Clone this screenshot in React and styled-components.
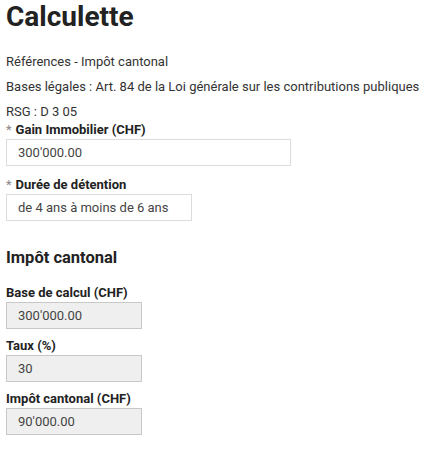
import React from "react";
import styled, { createGlobalStyle } from "styled-components";

const Global = createGlobalStyle`
  html, body { margin: 0; padding: 0; background: #fff; }
  body { font-family: Roboto, "Noto Sans", sans-serif; color: #333; }
`;

const Page = styled.div`
  padding: 0 6px;
`;

const Title = styled.h1`
  font-size: 28px;
  font-weight: 700;
  color: #222;
  margin: 0;
  line-height: 34px;
`;

const Refs = styled.div`
  margin-top: 18px;
  display: flex;
  flex-direction: column;
  gap: 6px;
`;

const Line = styled.p`
  margin: 0;
  font-size: 13px;
  line-height: 19px;
  color: #333;
`;

const Field = styled.div`
  display: flex;
  flex-direction: column;
  margin-top: ${(p) => p.$mt || 0}px;
`;

const Label = styled.label`
  font-size: 13px;
  font-weight: 700;
  color: #222;
  line-height: 18px;
`;

const Star = styled.span`
  color: #888;
  font-weight: 400;
  margin-right: 4px;
`;

const Input = styled.div`
  box-sizing: border-box;
  width: ${(p) => p.$w}px;
  height: 27px;
  border: 1px solid ${(p) => (p.$ro ? "#c8c8c8" : "#dcdcdc")};
  background: ${(p) => (p.$ro ? "#efefef" : "#fff")};
  padding: 0 11px;
  display: flex;
  align-items: center;
  font-size: 13px;
  color: #444;
`;

const Heading = styled.h2`
  font-size: 16.5px;
  font-weight: 700;
  color: #222;
  margin: 26px 0 0;
  line-height: 22px;
`;

export default function App() {
  return (
    <>
      <Global />
      <Page>
        <Title>Calculette</Title>
        <Refs>
          <Line>Références - Impôt cantonal</Line>
          <Line>Bases légales : Art. 84 de la Loi générale sur les contributions publiques</Line>
          <Line>RSG : D 3 05</Line>
        </Refs>
        <Field $mt={0}>
          <Label><Star>*</Star>Gain Immobilier (CHF)</Label>
          <Input $w={285}>300'000.00</Input>
        </Field>
        <Field $mt={10}>
          <Label><Star>*</Star>Durée de détention</Label>
          <Input $w={186}>de 4 ans à moins de 6 ans</Input>
        </Field>
        <Heading>Impôt cantonal</Heading>
        <Field $mt={15}>
          <Label>Base de calcul (CHF)</Label>
          <Input $w={136} $ro>300'000.00</Input>
        </Field>
        <Field $mt={8}>
          <Label>Taux (%)</Label>
          <Input $w={136} $ro>30</Input>
        </Field>
        <Field $mt={8}>
          <Label>Impôt cantonal (CHF)</Label>
          <Input $w={136} $ro>90'000.00</Input>
        </Field>
      </Page>
    </>
  );
}
